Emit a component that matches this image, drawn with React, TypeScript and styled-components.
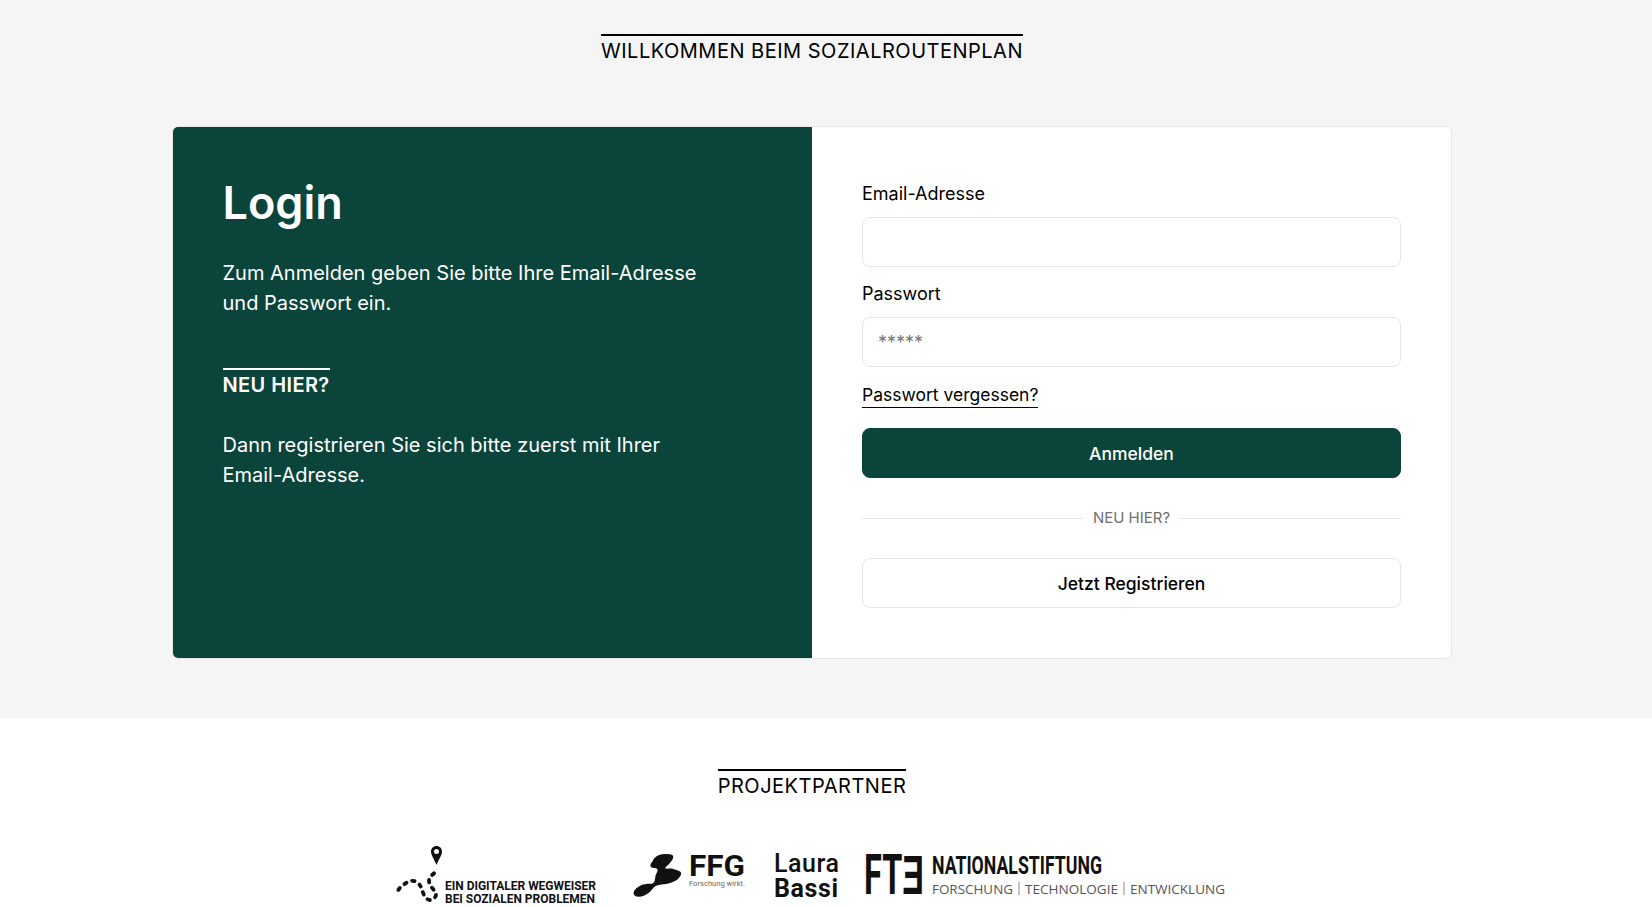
import React from "react";
import styled, { createGlobalStyle } from "styled-components";

const GlobalStyle = createGlobalStyle`
    html, body {
        margin: 0;
        padding: 0;
        height: 907px;
        overflow: hidden;
        background-color: #fff;
    }
    * {
        box-sizing: border-box;
    }
    body {
        font-family: Inter, "Liberation Sans", sans-serif;
        color: #000;
    }
`;

const Top = styled.main`
    height: 718px;
    background-color: #f5f5f5;
    padding: 34px 28px 0 0;
    display: flex;
    flex-direction: column;
    align-items: center;
`;

const SectionTitle = styled.h2`
    margin: 0;
    border-top: 2px solid #000;
    font-size: 20px;
    font-weight: 400;
    line-height: 30px;
    letter-spacing: 0.5px;
    color: #000;
`;

const Card = styled.section`
    margin-top: 60px;
    width: 1280px;
    height: 533px;
    display: grid;
    grid-template-columns: 639px 641px;
    background-color: #fff;
    border: 1px solid #e6e6e6;
    border-radius: 6px;
    overflow: hidden;
`;

const InfoPanel = styled.div`
    background-color: #0b443b;
    color: #fff;
    padding: 49px 50px 49px 49.500px;
`;

const Heading = styled.h1`
    margin: 0 0 29px;
    font-size: 45px;
    font-weight: 600;
    line-height: 53px;
`;

const InfoText = styled.p`
    margin: 0;
    max-width: 500px;
    font-size: 20px;
    line-height: 30px;
`;

const InfoTitle = styled.h3`
    display: inline-block;
    margin: 50px 0 30px;
    border-top: 2px solid #fff;
    font-size: 20px;
    font-weight: 600;
    line-height: 30px;
    letter-spacing: 0.4px;
`;

const FormPanel = styled.form`
    padding: 54px 52px 0 50px;
    display: flex;
    flex-direction: column;
`;

const Label = styled.label`
    font-size: 18px;
    line-height: 26px;
    margin-bottom: 10px;
`;

const Input = styled.input`
    width: 100%;
    height: 50px;
    margin-bottom: 14px;
    padding: 0 15px;
    border: 1px solid #e6e6e6;
    border-radius: 8px;
    background-color: #fff;
    font-family: inherit;
    font-size: 18px;
    outline: none;
    &::placeholder {
        color: #777;
    }
`;

const ForgotLink = styled.a`
    align-self: flex-start;
    margin-top: 2px;
    border-bottom: 1px solid #000;
    font-size: 17.500px;
    line-height: 24px;
    color: #000;
`;

const Button = styled.button<{ $primary?: boolean }>`
    width: 100%;
    height: 50px;
    border: 1px solid ${(p) => (p.$primary ? "#0b443b" : "#e6e6e6")};
    border-radius: 8px;
    background-color: ${(p) => (p.$primary ? "#0b443b" : "#fff")};
    color: ${(p) => (p.$primary ? "#fff" : "#000")};
    font-family: inherit;
    font-size: 17.500px;
    font-weight: 500;
`;

const LoginButton = styled(Button)`
    margin-top: 20px;
`;

const Divider = styled.div`
    display: flex;
    align-items: center;
    gap: 10px;
    margin: 28px 0;
    font-size: 15px;
    line-height: 24px;
    color: #6f6f6f;
    &::before,
    &::after {
        content: "";
        flex: 1;
        height: 1px;
        background-color: #e6e6e6;
    }
`;

const Partners = styled.footer`
    height: 189px;
    padding: 51px 28px 0 0;
    background-color: #fff;
    display: flex;
    flex-direction: column;
    align-items: center;
`;

const LogoRow = styled.div`
    margin: 45px 1px 0 0;
    display: flex;
    align-items: flex-start;
    gap: 28px;
`;

const LogoSvg = styled.svg`
    display: block;
    flex: none;
    overflow: visible;
`;

const LogoText = styled.text`
    font-family: Roboto, "Liberation Sans", sans-serif;
    fill: #111;
`;

const LogoTagline = styled.text`
    font-family: "Open Sans", "Liberation Sans", sans-serif;
    font-size: 13.500px;
    fill: #555;
`;

const FfgClaim = styled.text`
    font-family: Roboto, "Liberation Sans", sans-serif;
    font-size: 6.500px;
    fill: #666;
`;

const WegweiserLogo = () => (
    <LogoSvg width="210" height="62" viewBox="0 0 210 62">
        <path
            fill="#111"
            fillRule="evenodd"
            d="M40.500 0c-3.200 0-5.500 2.400-5.500 5.500 0 4 3.500 8 5.500 13.500 2-5.500 5.500-9.500 5.500-13.500 0-3.100-2.300-5.500-5.500-5.500zm0 3a2.500 2.500 0 1 1 0 5 2.500 2.500 0 0 1 0-5z"
        />
        <path
            d="M2.300 44C5 40 9 37.300 13 35.500c3-1.300 7-1 10 2.500 3 3.500 3 7 5 11 2 4 5 6 8 4.500 4-2 5-5 3-8-2-3-6-6-6-11 0-3 3-5.500 6-8"
            fill="none"
            stroke="#111"
            strokeWidth="3.800"
            strokeLinecap="round"
            strokeDasharray="2.500 6"
        />
        <LogoText x="49" y="44" fontSize="12.500" fontWeight="700" textLength="151" lengthAdjust="spacingAndGlyphs">
            EIN DIGITALER WEGWEISER
        </LogoText>
        <LogoText x="49" y="57" fontSize="12.500" fontWeight="700" textLength="150" lengthAdjust="spacingAndGlyphs">
            BEI SOZIALEN PROBLEMEN
        </LogoText>
    </LogoSvg>
);

const FfgLogo = () => (
    <LogoSvg width="113" height="52" viewBox="0 0 113 52">
        <path
            fill="#111"
            transform="translate(-5 5) scale(1.08 1)"
            d="M21.700 10.700C23 6 28 3 32.700 3c4 0 8.300 0 8.300 2.700 0 2.600-2 4.600-3.300 6.600-1.300 2-4.500 3.700-4 5 .5 1 5.300-.3 7.300.7 3 1 7.300 2 7.300 4.300 0 2.700-2 4.700-4 6.700-3 2-8 4-11.600 4.300-4 .4-6.500 1-8.300 2-2.500 1.500-3 3.700-5.400 5.900-3 2.700-6.500 4.500-10 4.500-3 0-4.700-1.500-4.700-3.500 0-3 3-5.800 6-7.500 3-1.700 7-2.200 10-2 3 .2 3.700-2.800 4-6.200.3-3.800 3-6.300 2-8.200-1-2-5.500-.3-6.400-3.300-.3-1.300.4-2.400.8-3.300z"
        />
        <LogoText x="55" y="30" fontSize="29" fontWeight="700" textLength="56" lengthAdjust="spacingAndGlyphs">
            FFG
        </LogoText>
        <FfgClaim x="55" y="40" textLength="56" lengthAdjust="spacingAndGlyphs">
            Forschung wirkt.
        </FfgClaim>
    </LogoSvg>
);

const BassiLogo = () => (
    <LogoSvg width="63" height="52" viewBox="0 0 63 52">
        <LogoText x="-1" y="26" fontSize="25" fontWeight="500" textLength="65" lengthAdjust="spacing">
            Laura
        </LogoText>
        <LogoText x="-1" y="51" fontSize="25" fontWeight="700" textLength="64" lengthAdjust="spacing">
            Bassi
        </LogoText>
    </LogoSvg>
);

const FteLogo = () => (
    <LogoSvg width="361" height="52" viewBox="0 0 361 52">
        <LogoText x="-2" y="48" fontSize="55" fontWeight="700" textLength="60" lengthAdjust="spacingAndGlyphs">
            FTƎ
        </LogoText>
        <LogoText x="66" y="28" fontSize="26.500" fontWeight="700" textLength="170" lengthAdjust="spacingAndGlyphs">
            NATIONALSTIFTUNG
        </LogoText>
        <LogoTagline x="66" y="48" textLength="81" lengthAdjust="spacingAndGlyphs">
            FORSCHUNG
        </LogoTagline>
        <LogoTagline x="159" y="48" textLength="93" lengthAdjust="spacingAndGlyphs">
            TECHNOLOGIE
        </LogoTagline>
        <LogoTagline x="264" y="48" textLength="95" lengthAdjust="spacingAndGlyphs">
            ENTWICKLUNG
        </LogoTagline>
        <path d="M153 36v13M258 36v13" stroke="#888" strokeWidth="1" />
    </LogoSvg>
);

const App: React.FC = () => {
    return (
        <>
            <GlobalStyle />
            <Top>
                <SectionTitle>WILLKOMMEN BEIM SOZIALROUTENPLAN</SectionTitle>
                <Card>
                    <InfoPanel>
                        <Heading>Login</Heading>
                        <InfoText>Zum Anmelden geben Sie bitte Ihre Email-Adresse und Passwort ein.</InfoText>
                        <InfoTitle>NEU HIER?</InfoTitle>
                        <InfoText>Dann registrieren Sie sich bitte zuerst mit Ihrer Email-Adresse.</InfoText>
                    </InfoPanel>
                    <FormPanel>
                        <Label htmlFor="email">Email-Adresse</Label>
                        <Input id="email" type="email" />
                        <Label htmlFor="password">Passwort</Label>
                        <Input id="password" type="text" placeholder="*****" />
                        <ForgotLink>Passwort vergessen?</ForgotLink>
                        <LoginButton type="button" $primary>
                            Anmelden
                        </LoginButton>
                        <Divider>NEU HIER?</Divider>
                        <Button type="button">Jetzt Registrieren</Button>
                    </FormPanel>
                </Card>
            </Top>
            <Partners>
                <SectionTitle>PROJEKTPARTNER</SectionTitle>
                <LogoRow>
                    <WegweiserLogo />
                    <FfgLogo />
                    <BassiLogo />
                    <FteLogo />
                </LogoRow>
            </Partners>
        </>
    );
};

export default App;
